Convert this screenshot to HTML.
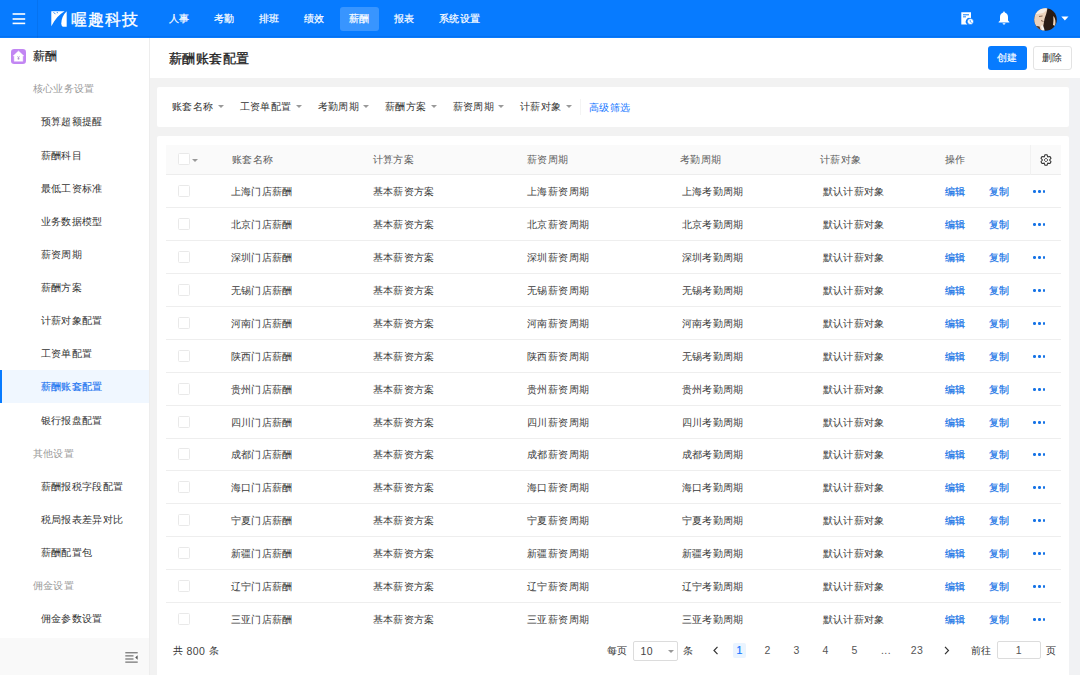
<!DOCTYPE html>
<html><head><meta charset="utf-8">
<style>
*{box-sizing:border-box;margin:0;padding:0}
html,body{width:1080px;height:675px;overflow:hidden}
body{font-family:"Liberation Sans",sans-serif;background:#f2f2f2;position:relative;color:#333;font-size:10px;line-height:1;letter-spacing:0.4px}
.ab{position:absolute;white-space:nowrap}
.hdr{position:absolute;left:0;top:0;width:1080px;height:37.5px;background:#077bff}
.hdr .div{position:absolute;left:37px;top:0;width:1px;height:37.5px;background:rgba(0,0,0,0.06)}
.nav{position:absolute;top:6.5px;height:24px;line-height:24.5px;padding:0 9px;color:#fff;font-size:10px;-webkit-text-stroke:0.2px #fff;border-radius:3px;white-space:nowrap}
.nav.act{background:rgba(255,255,255,0.2)}
.side{position:absolute;left:0;top:37.5px;width:150px;height:637.5px;background:#fff;border-right:1px solid #ededed}
.sfoot{position:absolute;left:0;top:638px;width:149px;height:37px;background:#f9f9f9}
.sg{position:absolute;left:32.5px;height:33px;line-height:33px;color:#999;font-size:10px;white-space:nowrap}
.si{position:absolute;left:0;width:149px;height:33px;line-height:33px;color:#333;font-size:10px;white-space:nowrap}
.si span{position:absolute;left:40.5px}
.si.act{background:#f0f7ff;color:#1a73f0;-webkit-text-stroke:0.15px #1a73f0}
.si.act:before{content:"";position:absolute;left:0;top:0;width:2px;height:33px;background:#077bff}
.titlebar{position:absolute;left:150px;top:37.5px;width:930px;height:40.5px;background:#fff}
.card{position:absolute;background:#fff;border-radius:2px}
.flt{position:absolute;top:99px;height:16px;line-height:16px;color:#333;font-size:10px;white-space:nowrap}
.car{display:inline-block;width:0;height:0;border-left:3px solid transparent;border-right:3px solid transparent;border-top:3.5px solid #999;margin-left:4px;vertical-align:middle;position:relative;top:-1px}
.th{position:absolute;left:166px;top:144.5px;width:895px;height:30px;background:#fafafa;border-bottom:1px solid #ededed}
.th span{position:absolute;top:0;line-height:30px;color:#5c5c5c;font-size:10px;white-space:nowrap}
.tr{position:absolute;left:166px;width:895px;height:33px;border-bottom:1px solid #eeeeee}
.tr span{position:absolute;top:0;line-height:33px;font-size:10px;white-space:nowrap;color:#3a3a3a}
.cb{position:absolute;left:11.5px;top:9.8px;width:12px;height:12px;border:1px solid #e9e9e9;border-radius:1.5px;background:#fff}
.c1{left:64.5px}.c2{left:206.5px}.c3{left:361px}.c4{left:515.5px}.c5{left:656.5px}
.tr .c6{left:778.5px;color:#1673e6;-webkit-text-stroke:0.2px #1673e6}.tr .c7{left:823px;color:#1673e6;-webkit-text-stroke:0.2px #1673e6}
.more{position:absolute;left:867px;top:15px;width:13px;height:3px}
.more b{position:absolute;top:0.2px;width:2.4px;height:2.4px;border-radius:50%;background:#1673e6}
.more b:nth-child(1){left:0.3px}.more b:nth-child(2){left:5.2px}.more b:nth-child(3){left:10.1px}

.avatar{left:1033.5px;top:7.5px;width:22.5px;height:22.5px;border-radius:50%;background:linear-gradient(100deg,#f3dcc6 0%,#e9c9ad 40%,#3a2418 48%,#24160f 80%,#d9b89a 92%)}
.pg{color:#555;font-size:10.5px;font-family:"Liberation Sans",sans-serif}
.sel span{font-size:10.5px}

.tr.last{border-bottom:none}

</style></head><body>
<div class="hdr"><div class="div"></div><i class="ab" style="left:0;top:36px;width:1080px;height:1px;background:rgba(0,40,120,0.12)"></i>
<svg class="ab" style="left:12px;top:13px" width="14" height="12" viewBox="0 0 14 12"><rect x="0.6" y="0.2" width="12.6" height="1.6" fill="#fff"/><rect x="0.6" y="5.2" width="12.6" height="1.6" fill="#fff"/><rect x="0.6" y="9.6" width="12.6" height="1.6" fill="#fff"/></svg>
<svg class="ab" style="left:51px;top:11px" width="16" height="16" viewBox="0 0 16 16"><path d="M0.3 0.3 H13.6 C8.8 3 4 8 0.3 15.2 Z" fill="#fff"/><path d="M15.7 0.3 V15.7 H12.3 C10.9 15.7 10.3 14.2 10.3 12.3 C10.3 8.2 12 4 15.7 0.3 Z" fill="#fff"/><path d="M2.5 1.2 L4.5 3.2 M6 1 L6.6 2.2" stroke="#077bff" stroke-width="0.9"/></svg>
<div class="ab logo" style="left:70.5px;top:10.5px;font-size:16px;color:#fff;line-height:17px;letter-spacing:1.2px;-webkit-text-stroke:0.35px #fff">喔趣科技</div>
<svg class="ab" style="left:961px;top:11.5px" width="13" height="13" viewBox="0 0 13 13"><path d="M0.3 0.3 H10 V6.5 A3.3 3.3 0 0 0 6.5 12.5 H0.3 Z" fill="#fff"/><rect x="2" y="2.3" width="6" height="1" fill="#077bff"/><rect x="2" y="4.4" width="3" height="0.9" fill="#077bff"/><circle cx="9.4" cy="9.5" r="3.1" fill="#fff" stroke="#077bff" stroke-width="0.7"/><path d="M9.2 7.8 V9.7 L10.6 10.5" stroke="#077bff" stroke-width="0.7" fill="none"/></svg>
<svg class="ab" style="left:997.5px;top:10.5px" width="12" height="14" viewBox="0 0 12 14"><path d="M6 0.5 C6.6 0.5 6.8 1 6.8 1.4 C9 2 10 3.8 10 6 V9.6 L11.4 11 V11.6 H0.6 V11 L2 9.6 V6 C2 3.8 3 2 5.2 1.4 C5.2 1 5.4 0.5 6 0.5 Z" fill="#fff"/><path d="M4.6 12.3 H7.4 C7.4 13.1 6.8 13.5 6 13.5 C5.2 13.5 4.6 13.1 4.6 12.3 Z" fill="#fff"/></svg>
<svg class="ab" style="left:1033.5px;top:7.5px" width="23" height="23" viewBox="0 0 23 23"><defs><clipPath id="av"><circle cx="11.5" cy="11.5" r="11.3"/></clipPath></defs><g clip-path="url(#av)"><rect width="23" height="23" fill="#2a1b14"/><path d="M0 0 H13.5 C13 4 11.5 8 10.5 11 C10 14 9.5 17 8.5 23 H0 Z" fill="#ecd3bd"/><path d="M0 0 H13 C12.5 2.5 11 4 9 5 C6 6 3 5.5 0 7 Z" fill="#f6eee6"/><path d="M5 8.5 L8.5 8 M7 12.5 L9.5 13.5" stroke="#7a5a48" stroke-width="0.9"/><path d="M19.3 8 C21.5 10 22 14 21.2 18 L19 17 C19.5 14 19.5 11 19.3 8 Z" fill="#ead2bb"/><path d="M8.5 17 C9.5 18.5 10.5 20.5 10.5 23 H8 C8 21 7.5 19 7 18 Z" fill="#f8f4f0"/><path d="M0 17.5 L5.5 18.5 L7 23 H0 Z" fill="#4a362c"/></g></svg>
<svg class="ab" style="left:1060.5px;top:16px" width="8" height="5" viewBox="0 0 8 5"><path d="M0.3 0.4 H7.5 L3.9 4.6 Z" fill="#fff"/></svg>
</div>
<div class="side"></div>
<div class="sfoot"><svg class="ab" style="left:124.5px;top:13.5px" width="13" height="11" viewBox="0 0 13 11"><rect x="0.3" y="0.3" width="12.4" height="1" fill="#555"/><rect x="0.3" y="3.4" width="8.2" height="1" fill="#555"/><rect x="0.3" y="6.5" width="8.2" height="1" fill="#555"/><rect x="0.3" y="9.6" width="12.4" height="1" fill="#555"/><path d="M12.6 3.3 V7.7 L10.2 5.5 Z" fill="#555"/></svg></div>
<svg class="ab" style="left:11px;top:48.5px" width="15" height="15" viewBox="0 0 15 15"><rect x="0" y="0" width="15" height="15" rx="3.2" fill="#c286f3"/><path d="M7.5 1.9 L12.9 6.9 H11.8 V12.3 H3.2 V6.9 H2.1 Z" fill="#fff" stroke="#fff" stroke-width="0.4" stroke-linejoin="round"/><path d="M6.4 7.2 L7.5 8.5 L8.6 7.2 M7.5 8.5 V10.6 M6.5 9.1 H8.5 M6.5 9.9 H8.5" stroke="#9a78c0" stroke-width="0.55" fill="none"/></svg>
<div class="titlebar"></div>
<i class="ab" style="left:150px;top:78px;width:7px;height:597px;background:#f2f2f2"></i><i class="ab" style="left:1069px;top:78px;width:11px;height:597px;background:#f1f2f4"></i>
<div class="card" style="left:157px;top:87px;width:912px;height:40px"></div>
<div class="card" style="left:157px;top:136px;width:912px;height:545px"></div>
<div class="th"><i class="cb" style="top:8.5px"></i><i class="car" style="position:absolute;left:26px;top:14px;margin:0"></i>
<span style="left:66px">账套名称</span><span style="left:206.5px">计算方案</span><span style="left:361px">薪资周期</span><span style="left:514px">考勤周期</span><span style="left:654px">计薪对象</span><span style="left:778.5px">操作</span>
<i style="position:absolute;left:864px;top:0;width:1px;height:30px;background:#f1f1f1"></i>
<svg style="position:absolute;left:873.5px;top:9px" width="12" height="12" viewBox="0 0 12 12"><path d="M4.99 0.80 L7.01 0.80 L7.80 2.88 L10.00 2.52 L11.01 4.27 L9.60 6.00 L11.01 7.73 L10.00 9.48 L7.80 9.12 L7.01 11.20 L4.99 11.20 L4.20 9.12 L2.00 9.48 L0.99 7.73 L2.40 6.00 L0.99 4.27 L2.00 2.52 L4.20 2.88 Z" fill="none" stroke="#333" stroke-width="1.05" stroke-linejoin="miter"/><path d="M6 4.1 L7.9 6 L6 7.9 L4.1 6 Z" fill="none" stroke="#444" stroke-width="0.9"/></svg>
</div>
<div class="ab" style="left:33px;top:50px;font-size:12px;-webkit-text-stroke:0.12px #222;color:#222;line-height:12px">薪酬</div>
<div class="ab" style="left:169px;top:52px;font-size:13px;-webkit-text-stroke:0.3px #222;color:#222;line-height:13px">薪酬账套配置</div>
<div class="ab" style="left:988px;top:46px;width:39px;height:24px;line-height:24px;text-align:center;background:#077bff;color:#fff;border-radius:3px;-webkit-text-stroke:0.15px #fff">创建</div>
<div class="ab" style="left:1033px;top:46px;width:39px;height:24px;line-height:22px;text-align:center;background:#fff;color:#333;border:1px solid #e3e3e3;border-radius:3px">删除</div>
<i class="ab" style="left:580px;top:99px;width:1px;height:16px;background:#f4f4f4"></i>
<div class="ab" style="left:589px;top:99.6px;line-height:16px;color:#1677ff">高级筛选</div>
<div class="ab" style="left:172.5px;top:645px;line-height:12px;color:#333">共</div><div class="ab" style="left:186.5px;top:645px;line-height:12px;color:#444;font-size:10.5px">800</div><div class="ab" style="left:208.5px;top:645px;line-height:12px;color:#333">条</div>
<div class="ab" style="left:606.5px;top:645px;line-height:12px;color:#333">每页</div>
<div class="ab sel" style="left:633px;top:641px;width:44.5px;height:20px;border:1px solid #dcdcdc;border-radius:2px"><span style="position:absolute;left:6.5px;top:0;line-height:18px;color:#444">10</span><i class="car" style="position:absolute;left:34px;top:8px;margin:0;border-top-color:#999"></i></div>
<div class="ab" style="left:683px;top:645px;line-height:12px;color:#333">条</div>
<svg class="ab" style="left:712px;top:646px" width="8" height="9" viewBox="0 0 8 9"><path d="M5.5 0.8 L2 4.5 L5.5 8.2" stroke="#333" stroke-width="1.2" fill="none"/></svg>
<div class="ab pg" style="left:733px;top:642.5px;width:13px;height:15px;background:#eaf4ff;border-radius:2px;color:#1677ff;text-align:center;line-height:15px;-webkit-text-stroke:0.2px #1677ff">1</div>
<div class="ab pg" style="left:762px;top:641px;width:11px;text-align:center;line-height:18px">2</div>
<div class="ab pg" style="left:791px;top:641px;width:11px;text-align:center;line-height:18px">3</div>
<div class="ab pg" style="left:820px;top:641px;width:11px;text-align:center;line-height:18px">4</div>
<div class="ab pg" style="left:849px;top:641px;width:11px;text-align:center;line-height:18px">5</div>
<div class="ab pg" style="left:879px;top:641px;width:14px;text-align:center;line-height:18px">...</div>
<div class="ab pg" style="left:908px;top:641px;width:18px;text-align:center;line-height:18px">23</div>
<svg class="ab" style="left:942.5px;top:646px" width="8" height="9" viewBox="0 0 8 9"><path d="M2 0.8 L5.5 4.5 L2 8.2" stroke="#333" stroke-width="1.2" fill="none"/></svg>
<div class="ab" style="left:970.5px;top:645px;line-height:12px;color:#333">前往</div>
<div class="ab" style="left:997px;top:641px;width:43.5px;height:18px;border:1px solid #dcdcdc;border-radius:2px;text-align:center;line-height:16px;color:#555;font-size:10.5px">1</div>
<div class="ab" style="left:1046px;top:645px;line-height:12px;color:#333">页</div>

<div class="nav" style="left:160px">人事</div>
<div class="nav" style="left:205px">考勤</div>
<div class="nav" style="left:250px">排班</div>
<div class="nav" style="left:295px">绩效</div>
<div class="nav act" style="left:340px">薪酬</div>
<div class="nav" style="left:385px">报表</div>
<div class="nav" style="left:430px">系统设置</div>
<div class="sg" style="top:72.30px">核心业务设置</div>
<div class="si" style="top:105.42px"><span>预算超额提醒</span></div>
<div class="si" style="top:138.54px"><span>薪酬科目</span></div>
<div class="si" style="top:171.66px"><span>最低工资标准</span></div>
<div class="si" style="top:204.78px"><span>业务数据模型</span></div>
<div class="si" style="top:237.90px"><span>薪资周期</span></div>
<div class="si" style="top:271.02px"><span>薪酬方案</span></div>
<div class="si" style="top:304.14px"><span>计薪对象配置</span></div>
<div class="si" style="top:337.26px"><span>工资单配置</span></div>
<div class="si act" style="top:370.38px"><span>薪酬账套配置</span></div>
<div class="si" style="top:403.50px"><span>银行报盘配置</span></div>
<div class="sg" style="top:436.62px">其他设置</div>
<div class="si" style="top:469.74px"><span>薪酬报税字段配置</span></div>
<div class="si" style="top:502.86px"><span>税局报表差异对比</span></div>
<div class="si" style="top:535.98px"><span>薪酬配置包</span></div>
<div class="sg" style="top:569.10px">佣金设置</div>
<div class="si" style="top:602.22px"><span>佣金参数设置</span></div>
<div class="flt" style="left:172px">账套名称<i class="car"></i></div>
<div class="flt" style="left:239.5px">工资单配置<i class="car"></i></div>
<div class="flt" style="left:317.5px">考勤周期<i class="car"></i></div>
<div class="flt" style="left:385.0px">薪酬方案<i class="car"></i></div>
<div class="flt" style="left:452.5px">薪资周期<i class="car"></i></div>
<div class="flt" style="left:520.0px">计薪对象<i class="car"></i></div>
<div class="tr" style="top:175.00px"><i class="cb"></i><span class="c1">上海门店薪酬</span><span class="c2">基本薪资方案</span><span class="c3">上海薪资周期</span><span class="c4">上海考勤周期</span><span class="c5">默认计薪对象</span><span class="c6">编辑</span><span class="c7">复制</span><i class="more"><b></b><b></b><b></b></i></div>
<div class="tr" style="top:208.00px"><i class="cb"></i><span class="c1">北京门店薪酬</span><span class="c2">基本薪资方案</span><span class="c3">北京薪资周期</span><span class="c4">北京考勤周期</span><span class="c5">默认计薪对象</span><span class="c6">编辑</span><span class="c7">复制</span><i class="more"><b></b><b></b><b></b></i></div>
<div class="tr" style="top:241.00px"><i class="cb"></i><span class="c1">深圳门店薪酬</span><span class="c2">基本薪资方案</span><span class="c3">深圳薪资周期</span><span class="c4">深圳考勤周期</span><span class="c5">默认计薪对象</span><span class="c6">编辑</span><span class="c7">复制</span><i class="more"><b></b><b></b><b></b></i></div>
<div class="tr" style="top:274.00px"><i class="cb"></i><span class="c1">无锡门店薪酬</span><span class="c2">基本薪资方案</span><span class="c3">无锡薪资周期</span><span class="c4">无锡考勤周期</span><span class="c5">默认计薪对象</span><span class="c6">编辑</span><span class="c7">复制</span><i class="more"><b></b><b></b><b></b></i></div>
<div class="tr" style="top:307.00px"><i class="cb"></i><span class="c1">河南门店薪酬</span><span class="c2">基本薪资方案</span><span class="c3">河南薪资周期</span><span class="c4">河南考勤周期</span><span class="c5">默认计薪对象</span><span class="c6">编辑</span><span class="c7">复制</span><i class="more"><b></b><b></b><b></b></i></div>
<div class="tr" style="top:340.00px"><i class="cb"></i><span class="c1">陕西门店薪酬</span><span class="c2">基本薪资方案</span><span class="c3">陕西薪资周期</span><span class="c4">无锡考勤周期</span><span class="c5">默认计薪对象</span><span class="c6">编辑</span><span class="c7">复制</span><i class="more"><b></b><b></b><b></b></i></div>
<div class="tr" style="top:373.00px"><i class="cb"></i><span class="c1">贵州门店薪酬</span><span class="c2">基本薪资方案</span><span class="c3">贵州薪资周期</span><span class="c4">贵州考勤周期</span><span class="c5">默认计薪对象</span><span class="c6">编辑</span><span class="c7">复制</span><i class="more"><b></b><b></b><b></b></i></div>
<div class="tr" style="top:406.00px"><i class="cb"></i><span class="c1">四川门店薪酬</span><span class="c2">基本薪资方案</span><span class="c3">四川薪资周期</span><span class="c4">四川考勤周期</span><span class="c5">默认计薪对象</span><span class="c6">编辑</span><span class="c7">复制</span><i class="more"><b></b><b></b><b></b></i></div>
<div class="tr" style="top:438.00px"><i class="cb"></i><span class="c1">成都门店薪酬</span><span class="c2">基本薪资方案</span><span class="c3">成都薪资周期</span><span class="c4">成都考勤周期</span><span class="c5">默认计薪对象</span><span class="c6">编辑</span><span class="c7">复制</span><i class="more"><b></b><b></b><b></b></i></div>
<div class="tr" style="top:471.00px"><i class="cb"></i><span class="c1">海口门店薪酬</span><span class="c2">基本薪资方案</span><span class="c3">海口薪资周期</span><span class="c4">海口考勤周期</span><span class="c5">默认计薪对象</span><span class="c6">编辑</span><span class="c7">复制</span><i class="more"><b></b><b></b><b></b></i></div>
<div class="tr" style="top:504.00px"><i class="cb"></i><span class="c1">宁夏门店薪酬</span><span class="c2">基本薪资方案</span><span class="c3">宁夏薪资周期</span><span class="c4">宁夏考勤周期</span><span class="c5">默认计薪对象</span><span class="c6">编辑</span><span class="c7">复制</span><i class="more"><b></b><b></b><b></b></i></div>
<div class="tr" style="top:537.00px"><i class="cb"></i><span class="c1">新疆门店薪酬</span><span class="c2">基本薪资方案</span><span class="c3">新疆薪资周期</span><span class="c4">新疆考勤周期</span><span class="c5">默认计薪对象</span><span class="c6">编辑</span><span class="c7">复制</span><i class="more"><b></b><b></b><b></b></i></div>
<div class="tr" style="top:570.00px"><i class="cb"></i><span class="c1">辽宁门店薪酬</span><span class="c2">基本薪资方案</span><span class="c3">辽宁薪资周期</span><span class="c4">辽宁考勤周期</span><span class="c5">默认计薪对象</span><span class="c6">编辑</span><span class="c7">复制</span><i class="more"><b></b><b></b><b></b></i></div>
<div class="tr last" style="top:603.00px"><i class="cb"></i><span class="c1">三亚门店薪酬</span><span class="c2">基本薪资方案</span><span class="c3">三亚薪资周期</span><span class="c4">三亚考勤周期</span><span class="c5">默认计薪对象</span><span class="c6">编辑</span><span class="c7">复制</span><i class="more"><b></b><b></b><b></b></i></div>
</body></html>
